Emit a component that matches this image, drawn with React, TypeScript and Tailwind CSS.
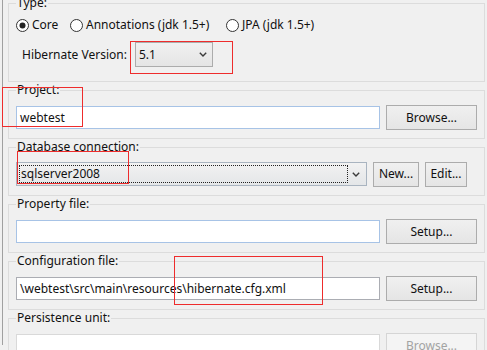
import type { ReactNode } from "react";

function Group({
  label,
  className = "",
  children,
}: {
  label: string;
  className?: string;
  children: ReactNode;
}) {
  return (
    <fieldset
      className={`m-0 min-w-0 w-[477px] border border-[#dcdcdc] px-[7px] ${className}`}
    >
      <legend className="px-[1px] leading-[16px]">{label}</legend>
      {children}
    </fieldset>
  );
}

function Button({
  children,
  className = "",
  disabled = false,
}: {
  children: ReactNode;
  className?: string;
  disabled?: boolean;
}) {
  return (
    <div
      className={`flex h-[25px] items-center justify-center border ${
        disabled
          ? "border-[#d5d5d5] bg-[#f4f4f4] text-[#a3a3a3]"
          : "border-[#acacac] bg-gradient-to-b from-[#f0f0f0] to-[#e5e5e5]"
      } ${className}`}
    >
      {children}
    </div>
  );
}

function Field({
  value = "",
  border = "border-[#a7c3e6]",
  className = "w-[364px]",
}: {
  value?: string;
  border?: string;
  className?: string;
}) {
  return (
    <div
      className={`flex h-[23px] items-center overflow-hidden whitespace-nowrap border bg-white pl-[3px] ${border} ${className}`}
    >
      {value}
    </div>
  );
}

function Chevron() {
  return (
    <svg width="8" height="5" viewBox="0 0 8 5">
      <path d="M0.8 0.8 L4 4 L7.2 0.8" fill="none" stroke="#3a3a3a" strokeWidth="1.4" />
    </svg>
  );
}

function Radio({ checked, label, className = "" }: { checked?: boolean; label: string; className?: string }) {
  return (
    <div className={`flex items-center ${className}`}>
      <svg width="13" height="13" viewBox="0 0 13 13" className="shrink-0">
        <circle cx="6.5" cy="6.5" r="6" fill="#fff" stroke="#333" strokeWidth="1" />
        {checked && <circle cx="6.5" cy="6.5" r="3" fill="#222" />}
      </svg>
      <span className="ml-[3px]">{label}</span>
    </div>
  );
}

export default function App() {
  return (
    <div className="relative h-[350px] w-[487px] overflow-hidden bg-[#f0f0f0] font-['Noto_Sans',sans-serif] text-[12px] text-[#111]">
      <div className="ml-[2px] h-full border-l border-[#a0a0a0] pl-[5px]">
        <Group label="Type:" className="mt-[-5px] pt-[6px] pb-[14px]">
          <div className="flex h-[16px] items-center">
            <Radio checked label="Core" className="w-[54px]" />
            <Radio label="Annotations (jdk 1.5+)" className="w-[156px]" />
            <Radio label="JPA (jdk 1.5+)" />
          </div>
          <div className="mt-[9px] flex h-[25px] items-center">
            <span className="ml-[6px] w-[113px]">Hibernate Version:</span>
            <div className="flex h-[25px] w-[78px] items-center justify-between border border-[#acacac] bg-gradient-to-b from-[#f0f0f0] to-[#e5e5e5] pl-[3px] pr-[5px]">
              <span>5.1</span>
              <Chevron />
            </div>
          </div>
        </Group>

        <Group label="Project:" className="pt-[7px] pb-[8px]">
          <div className="flex h-[25px] items-center gap-[6px]">
            <Field value="webtest" />
            <Button className="w-[91px]">Browse...</Button>
          </div>
        </Group>

        <Group label="Database connection:" className="pt-[7px] pb-[9px]">
          <div className="flex h-[24px] items-center gap-[6px]">
            <div className="flex h-[24px] w-[351px] items-center border border-[#a9b4c0] bg-gradient-to-b from-[#f2f2f2] to-[#e4e6e8] p-[2px]">
              <div className="flex h-full w-[329px] items-center border border-dotted border-[#222] pl-[1px]">
                sqlserver2008
              </div>
              <div className="flex flex-1 justify-center">
                <Chevron />
              </div>
            </div>
            <Button className="h-[24px] w-[46px]">New...</Button>
            <Button className="h-[24px] w-[42px]">Edit...</Button>
          </div>
        </Group>

        <Group label="Property file:" className="pt-[7px] pb-[8px]">
          <div className="flex h-[25px] items-center gap-[6px]">
            <Field />
            <Button className="w-[91px]">Setup...</Button>
          </div>
        </Group>

        <Group label="Configuration file:" className="pt-[7px] pb-[8px]">
          <div className="flex h-[25px] items-center gap-[6px]">
            <Field value="\webtest\src\main\resources\hibernate.cfg.xml" border="border-[#abadb3]" />
            <Button className="w-[91px]">Setup...</Button>
          </div>
        </Group>

        <Group label="Persistence unit:" className="pt-[7px] pb-[8px]">
          <div className="flex h-[25px] items-center gap-[6px]">
            <Field border="border-[#d9d9d9] bg-[#f0f0f0]" />
            <Button disabled className="w-[91px]">Browse...</Button>
          </div>
        </Group>
      </div>

      {/* red annotation boxes */}
      <div className="absolute left-[130px] top-[41px] h-[33px] w-[103px] border border-[#ee2c2c]" />
      <div className="absolute left-[2px] top-[87px] h-[40px] w-[81px] border border-[#ee2c2c]" />
      <div className="absolute left-[17px] top-[151px] h-[33px] w-[112px] border border-[#ee2c2c]" />
      <div className="absolute left-[174px] top-[256px] h-[49px] w-[149px] border border-[#ee2c2c]" />
    </div>
  );
}
